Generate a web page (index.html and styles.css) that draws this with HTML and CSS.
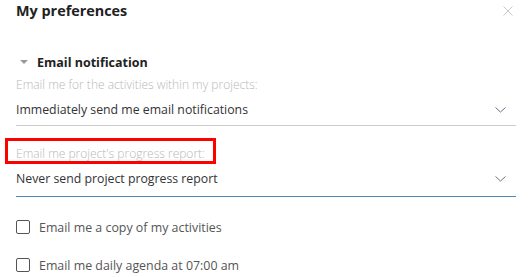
FILE: index.html
```html
<!DOCTYPE html>
<html>
<head>
<meta charset="utf-8">
<link rel="stylesheet" href="styles.css">
</head>
<body>
<div class="dialog">
  <div class="header">
    <h1 class="title">My preferences</h1>
    <svg class="close" width="10" height="10" viewBox="0 0 10 10"><path d="M0.5 0.5 L9.5 9.5 M9.5 0.5 L0.5 9.5" stroke="#c8c8c8" stroke-width="1" fill="none"/></svg>
  </div>
  <div class="section-title">
    <svg class="caret" width="8" height="4" viewBox="0 0 8 4"><path d="M0 0 H8 L4 4 Z" fill="#999"/></svg>
    <span>Email notification</span>
  </div>
  <div class="field">
    <div class="label">Email me for the activities within my projects:</div>
    <div class="select">
      <span>Immediately send me email notifications</span>
      <svg class="chev" width="11" height="6" viewBox="0 0 11 6"><path d="M0.5 0.5 L5.5 5 L10.5 0.5" stroke="#6b7480" stroke-width="1" fill="none"/></svg>
    </div>
  </div>
  <div class="field focused">
    <div class="label">Email me project's progress report:</div>
    <div class="select">
      <span>Never send project progress report</span>
      <svg class="chev" width="11" height="6" viewBox="0 0 11 6"><path d="M0.5 0.5 L5.5 5 L10.5 0.5" stroke="#6b7480" stroke-width="1" fill="none"/></svg>
    </div>
    <div class="highlight"></div>
  </div>
  <label class="check first"><span class="box"></span><span>Email me a copy of my activities</span></label>
  <label class="check"><span class="box"></span><span>Email me daily agenda at 07:00 am</span></label>
</div>
</body>
</html>
```

FILE: styles.css
```css
html, body {
  margin: 0;
  padding: 0;
  background: #ffffff;
}
body {
  font-family: "Open Sans", "Liberation Sans", sans-serif;
  font-size: 12px;
  color: #333333;
}
.dialog {
  padding: 0 16px;
}
.header {
  display: flex;
  justify-content: space-between;
  align-items: flex-start;
  height: 24px;
  padding-top: 1px;
}
.title {
  margin: 0;
  font-size: 14.4px;
  line-height: 20px;
  font-weight: 700;
  color: #222222;
}
.close {
  margin-top: 5px;
  margin-right: 3px;
}
.section-title {
  display: flex;
  align-items: center;
  margin-top: 27px;
  height: 20px;
  font-weight: 700;
  font-size: 12.5px;
  color: #222222;
}
.caret {
  margin-left: 4px;
  margin-right: 9px;
}
.field {
  position: relative;
}
.label {
  margin-top: 4px;
  line-height: 18px;
  color: #b8b8b8;
  font-weight: 300;
}
.select {
  display: flex;
  justify-content: space-between;
  align-items: center;
  height: 31px;
  border-bottom: 1px solid #cccccc;
  color: #333333;
  font-size: 12.3px;
}
.chev {
  margin-right: 10px;
}
.field.focused {
  margin-top: 19px;
}
.field.focused .select {
  padding-bottom: 2px;
  border-bottom-color: #4a8ab5;
}
.highlight {
  position: absolute;
  left: -11px;
  top: -7px;
  width: 205px;
  height: 20px;
  border: 3px solid #ff0000;
  pointer-events: none;
}
.check {
  display: flex;
  align-items: center;
  height: 20px;
  color: #555555;
  font-size: 12.4px;
}
.check.first {
  margin-top: 20px;
}
.check + .check {
  margin-top: 18px;
}
.box {
  width: 12px;
  height: 12px;
  border: 1px solid #555555;
  border-radius: 2px;
  margin-right: 9px;
}
```
